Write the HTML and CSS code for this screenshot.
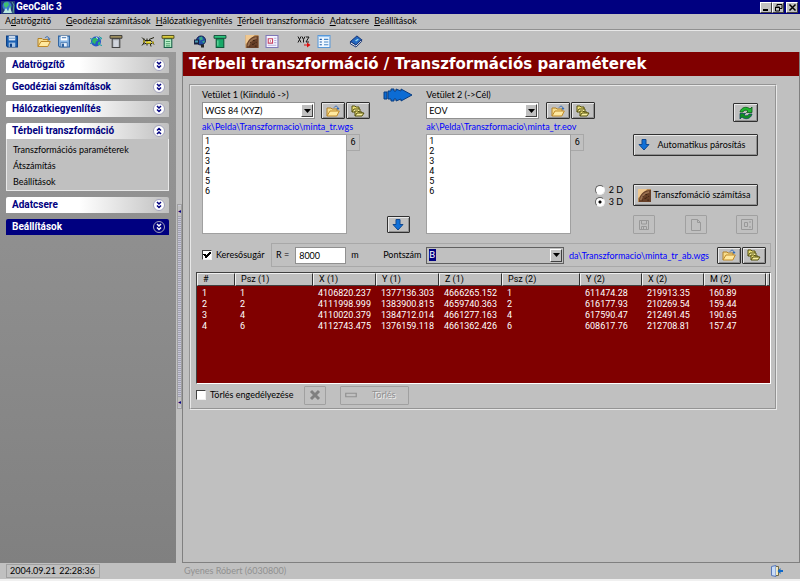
FILE: index.html
```html
<!DOCTYPE html>
<html lang="hu">
<head>
    <meta charset="UTF-8">
    <meta name="viewport" content="width=device-width, initial-scale=1.0">
    <title>GeoCalc 3</title>
    <link rel="stylesheet" href="styles.css">
</head>
<body>
    <!-- shared icons -->
    <svg class="sprite" aria-hidden="true">
        <symbol id="i-disk" viewBox="0 0 12 12">
            <path d="M1 1h10v10H2L1 10z" fill="#1c62b4" stroke="#0b3f86"/>
            <path d="M3 1h6v4H3z" fill="#dfeaf6"/><path d="M3 3h6" stroke="#7fa3cc"/>
            <path d="M3 7h6v4H3z" fill="#a8c4e4"/><path d="M4 8h2v3H4z" fill="#0b3f86"/>
        </symbol>
        <symbol id="i-disk2" viewBox="0 0 12 12">
            <path d="M1 1h10v10H2L1 10z" fill="#8cb8e6" stroke="#2d62a0"/>
            <path d="M3 1h6v4H3z" fill="#fff"/><path d="M4 2.500h4" stroke="#4878b0"/>
            <path d="M3 7h6v4H3z" fill="#e4eefa" stroke="#2d62a0" stroke-width=".6"/><path d="M4 8h2v3H4z" fill="#2d62a0"/>
        </symbol>
        <symbol id="i-open" viewBox="0 0 14 12">
            <path d="M1 11V3h4l1 1h5v2" fill="#f6dc8c" stroke="#b08028"/>
            <path d="M1 11l3-5h9.300l-2.500 5z" fill="#ffe9a0" stroke="#c08a28"/>
            <path d="M8 2.500C9.500.5 11.500 1 12 3" fill="none" stroke="#2a66b8"/><path d="M10.500 3h3L12 5z" fill="#2a66b8"/>
        </symbol>
        <symbol id="i-folders" viewBox="0 0 14 12">
            <path d="M1 7V1h3l1 1h3v2" fill="#eee27a" stroke="#54500c"/>
            <path d="M1 7l2-3h6v3z" fill="#f8f0a0" stroke="#54500c"/>
            <path d="M4 11V6h3l1 1h3v1.500" fill="#eee27a" stroke="#54500c"/>
            <path d="M4 11l2-3h7l-2 3z" fill="#f8f0a0" stroke="#54500c"/>
        </symbol>
        <symbol id="i-globe" viewBox="0 0 14 12">
            <circle cx="7" cy="6" r="5" fill="#2458c8"/>
            <path d="M4 3l4-1 1 3-2 1-1 3-3-3zM9 7l2-1v3L9 10z" fill="#30b868"/>
            <path d="M1 3l3 1M10 1l3 2M10 4l3-1M1 8l3-1M10 9l3 1" stroke="#18a0a8"/>
            <path d="M7 2l2 1" stroke="#d8f4ff"/>
        </symbol>
        <symbol id="i-scroll" viewBox="0 0 12 12">
            <path d="M2.500 3.500h7v8h-7z" fill="#b8bcc4" stroke="#444"/><path d="M4 5h4v6H4z" fill="#d0d4dc"/>
            <path d="M.5.500h11v2.500H.5z" fill="#a09060" stroke="#303030" stroke-width=".8"/>
        </symbol>
        <symbol id="i-scroll-l" viewBox="0 0 12 12">
            <path d="M2.500 3.500h7v8h-7z" fill="#b8f0c8" stroke="#186048"/><path d="M4 6h4M4 8h4M4 10h4" stroke="#50a070"/>
            <path d="M.5.500h11v2.500H.5z" fill="#e0d040" stroke="#404010" stroke-width=".8"/>
        </symbol>
        <symbol id="i-scroll-g" viewBox="0 0 12 12">
            <path d="M2.500 3.500h7v8h-7z" fill="#18a868" stroke="#0c5838"/><path d="M4 5v5" stroke="#70e0a8"/>
            <path d="M.5.500h11v2.500H.5z" fill="#30c880" stroke="#0c4030" stroke-width=".8"/>
        </symbol>
        <symbol id="i-survey" viewBox="0 0 14 12">
            <path d="M1 2l3 3M1 10l3-4M3 3v6M4 5h6M4 8h7M6 3v7M8 4l5-2M10 5l3 4M9 7l1 4" fill="none" stroke="#202010"/>
            <path d="M5 6h5v2H5z" fill="#e8d820"/><path d="M11 6h2v2h-2zM2 5h2v2H2z" fill="#a89818"/>
        </symbol>
        <symbol id="i-net" viewBox="0 0 14 12">
            <circle cx="8" cy="5" r="4.500" fill="#2050a8" stroke="#101848"/>
            <path d="M6 2l3-1 1 3-3 1zM9 6l3-1-1 3z" fill="#38a888"/>
            <path d="M1 4h5v5H1z" fill="#182040"/><path d="M2 5h3v2H2z" fill="#4a9ab0"/>
            <path d="M8 9h3v3H8z" fill="#282828"/>
        </symbol>
        <symbol id="i-planet" viewBox="0 0 14 14">
            <path d="M0 0h14v14H0z" fill="#b88850"/><path d="M0 0h10L0 10z" fill="#f0c890"/>
            <path d="M1 14C1 6 6 1 14 1v13z" fill="#684028"/>
            <path d="M3 12c1-5 4-8 9-9" fill="none" stroke="#987050" stroke-width="2"/>
            <path d="M5 8h1M8 6h2M7 10h2M11 8h1M10 12h2M4 12h1M9 9h1" stroke="#382010"/>
        </symbol>
        <symbol id="i-card" viewBox="0 0 12 12">
            <path d="M.5.500h11v11H.5z" fill="#f4f4ff" stroke="#8078b8"/>
            <path d="M2.500 3.500h4v4h-4z" fill="#fff" stroke="#c84060"/><path d="M4 5h1v1H4z" fill="#a01830"/>
            <path d="M8 3h2M8 5h2M8 7h2M2 9.500h8" stroke="#b8b0d8"/>
        </symbol>
        <symbol id="i-xyz" viewBox="0 0 14 12">
            <path d="M1 1l3 6M4 1L1 7M5 1l1.500 3L8 1M6.500 4v3M9 1.500h3L9 6.500h3" fill="none" stroke="#181818"/>
            <path d="M7 9.500h4" stroke="#e01010"/><path d="M10 7l3.500 2.500L10 12z" fill="#e01010"/>
        </symbol>
        <symbol id="i-list" viewBox="0 0 12 12">
            <path d="M.5.500h11v11H.5z" fill="#f0f8ff" stroke="#5898d8"/><path d="M1 1h10v1H1z" fill="#90c0f0"/>
            <path d="M2 4h2M2 6.500h2M2 9h2" stroke="#1858a8"/><path d="M6 4h4M6 6.500h4M6 9h4" stroke="#4888c8"/>
        </symbol>
        <symbol id="i-book" viewBox="0 0 14 14">
            <path d="M1 7l7-6 5 4-6 6z" fill="#2468c0" stroke="#0c2c70"/>
            <path d="M1 7v2.500L7 13l6-6V5l-6 6z" fill="#f0f0f0" stroke="#0c2c70"/>
            <path d="M6 6l3-2 1 1-3 2z" fill="#90d8f0"/>
        </symbol>
        <symbol id="i-down" viewBox="0 0 12 12">
            <path d="M4 .5h4v5h3L6 11 1 5.500h3z" fill="#1070d8" stroke="#104890"/>
        </symbol>
        <symbol id="i-x" viewBox="0 0 14 14">
            <path d="M3 3l8 8M11 3l-8 8" stroke="#808080" stroke-width="3"/>
        </symbol>
        <symbol id="i-more" viewBox="0 0 12 12">
            <circle cx="6" cy="6" r="5.500" class="ring"/><path d="M4 3l2 2 2-2M4 6.500l2 2 2-2" class="chev"/>
        </symbol>
        <symbol id="i-less" viewBox="0 0 12 12">
            <circle cx="6" cy="6" r="5.500" class="ring"/><path d="M4 5.500l2-2 2 2M4 9l2-2 2 2" class="chev"/>
        </symbol>
        <symbol id="i-drop" viewBox="0 0 7 4"><path d="M0 0h7L3.500 4z" fill="#000"/></symbol>
    </svg>

    <div class="titlebar">
        <svg class="logo" viewBox="0 0 14 13">
            <path d="M0 0h14v13H0z" fill="#203878"/><circle cx="6" cy="5" r="4.500" fill="#3878d0"/>
            <path d="M3 2l4-1 1 3-3 3-2-2zM8 6l2-1v3z" fill="#40c070"/>
            <path d="M2 12l3-5 2 3 2-4 2 6z" fill="#b8e8e0"/><path d="M11 1l2 3-1 8" fill="none" stroke="#58a890"/>
        </svg>
        <h1>GeoCalc 3</h1>
        <div class="win-buttons">
            <button aria-label="Kis méret"><svg viewBox="0 0 9 9"><path d="M1 7h5" stroke="#000" stroke-width="2"/></svg></button>
            <button aria-label="Előző méret"><svg viewBox="0 0 9 9"><path d="M3 3V1.500h5v4H6M3 1.500h5M1.500 4h4v4h-4zM1 4.500h5" fill="none" stroke="#000"/></svg></button>
            <button class="close" aria-label="Bezárás"><svg viewBox="0 0 9 9"><path d="M1.500 1.500l6 6M7.500 1.500l-6 6" stroke="#000" stroke-width="1.500"/></svg></button>
        </div>
    </div>

    <nav class="menubar">
        <a href="#" class="first">A<u>d</u>atrögzítő</a>
        <a href="#"><u>G</u>eodéziai számítások</a>
        <a href="#"><u>H</u>álózatkiegyenlítés</a>
        <a href="#"><u>T</u>érbeli transzformáció</a>
        <a href="#"><u>A</u>datcsere</a>
        <a href="#"><u>B</u>eállítások</a>
    </nav>

    <div class="toolbar">
        <div class="tools"><button aria-label="Mentés"><svg><use href="#i-disk"/></svg></button></div>
        <div class="tools">
            <button aria-label="Megnyitás"><svg><use href="#i-open"/></svg></button>
            <button aria-label="Mentés másként"><svg><use href="#i-disk2"/></svg></button>
        </div>
        <div class="tools">
            <button aria-label="Geodéziai számítások"><svg><use href="#i-globe"/></svg></button>
            <button aria-label="Jegyzőkönyv"><svg><use href="#i-scroll"/></svg></button>
        </div>
        <div class="tools">
            <button aria-label="Mérések"><svg><use href="#i-survey"/></svg></button>
            <button aria-label="Mérési jegyzőkönyv"><svg><use href="#i-scroll-l"/></svg></button>
        </div>
        <div class="tools">
            <button aria-label="Hálózat"><svg><use href="#i-net"/></svg></button>
            <button aria-label="Hálózati jegyzőkönyv"><svg><use href="#i-scroll-g"/></svg></button>
        </div>
        <div class="tools">
            <button aria-label="Transzformáció"><svg><use href="#i-planet"/></svg></button>
            <button aria-label="Paraméterek"><svg><use href="#i-card"/></svg></button>
        </div>
        <div class="tools">
            <button aria-label="Koordináták"><svg><use href="#i-xyz"/></svg></button>
            <button aria-label="Lista"><svg><use href="#i-list"/></svg></button>
        </div>
        <div class="tools"><button aria-label="Súgó"><svg><use href="#i-book"/></svg></button></div>
    </div>

    <div class="workspace">
        <aside class="sidebar">
            <button class="section">Adatrögzítő<svg><use href="#i-more"/></svg></button>
            <button class="section">Geodéziai számítások<svg><use href="#i-more"/></svg></button>
            <button class="section">Hálózatkiegyenlítés<svg><use href="#i-more"/></svg></button>
            <div>
                <button class="section">Térbeli transzformáció<svg><use href="#i-less"/></svg></button>
                <div class="section-body">
                    <a href="#">Transzformációs paraméterek</a>
                    <a href="#">Átszámítás</a>
                    <a href="#">Beállítások</a>
                </div>
            </div>
            <button class="section">Adatcsere<svg><use href="#i-more"/></svg></button>
            <button class="section active">Beállítások<svg><use href="#i-more"/></svg></button>
        </aside>
        <div class="splitter">
            <div class="grip"><span>◂</span><span>◂</span></div>
        </div>

        <main class="content">
            <h2>Térbeli transzformáció / Transzformációs paraméterek</h2>
            <div class="group">
                <div class="setup">
                    <div class="projection">
                        <label for="proj1">Vetület 1 (Kiinduló -&gt;)</label>
                        <div class="pick">
                            <span class="combo"><select id="proj1"><option>WGS 84 (XYZ)</option></select><span class="drop"><svg><use href="#i-drop"/></svg></span></span>
                            <span class="pair">
                                <button class="btn" aria-label="Megnyitás"><svg><use href="#i-open"/></svg></button>
                                <button class="btn" aria-label="Mappák"><svg><use href="#i-folders"/></svg></button>
                            </span>
                        </div>
                        <a href="#" class="path">ak\Pelda\Transzformacio\minta_tr.wgs</a>
                        <div class="points">
                            <select size="6" aria-label="Pontok 1">
                                <option>1</option><option>2</option><option>3</option><option>4</option><option>5</option><option>6</option>
                            </select>
                            <span class="count">6</span>
                        </div>
                    </div>
                    <div class="between">
                        <svg class="big-arrow" viewBox="0 0 30 14"><path d="M1 4h3v7H1zM5 3h3V1h3v2h2V1l5 2V1l11 6-11 6v-2l-5 2v-2h-2v2H8v-2H5z" fill="#0c6cd4" stroke="#083c80"/></svg>
                        <button class="btn" aria-label="Hozzáadás"><svg><use href="#i-down"/></svg></button>
                    </div>
                    <div class="projection">
                        <label for="proj2">Vetület 2 (-&gt;Cél)</label>
                        <div class="pick">
                            <span class="combo"><select id="proj2"><option>EOV</option></select><span class="drop"><svg><use href="#i-drop"/></svg></span></span>
                            <span class="pair">
                                <button class="btn" aria-label="Megnyitás"><svg><use href="#i-open"/></svg></button>
                                <button class="btn" aria-label="Mappák"><svg><use href="#i-folders"/></svg></button>
                            </span>
                        </div>
                        <a href="#" class="path">ak\Pelda\Transzformacio\minta_tr.eov</a>
                        <div class="points">
                            <select size="6" aria-label="Pontok 2">
                                <option>1</option><option>2</option><option>3</option><option>4</option><option>5</option><option>6</option>
                            </select>
                            <span class="count">6</span>
                        </div>
                    </div>
                    <div class="dims">
                        <label><input type="radio" name="dim">2 D</label>
                        <label><input type="radio" name="dim" checked>3 D</label>
                    </div>
                    <div class="actions">
                        <button class="btn refresh" aria-label="Frissítés"><svg viewBox="0 0 16 14"><path d="M2 6C3 1 9 0 12 3l2-2v5.500H8.500L10 5C8 3.500 5.500 4 5 6z" fill="#20b830" stroke="#0c5818" stroke-width=".8"/><path d="M14 8c-1 5-7 6-10 3l-2 2V7.500h5.500L6 9c2 1.500 4.500 1 5-1z" fill="#109020" stroke="#0c4858" stroke-width=".8"/></svg></button>
                        <button class="btn wide auto"><svg><use href="#i-down"/></svg><span>Automatikus párosítás</span></button>
                        <button class="btn wide calc"><svg><use href="#i-planet"/></svg><span>Transzfomáció számítása</span></button>
                        <div class="outputs">
                            <button class="btn" disabled aria-label="Mentés"><svg viewBox="0 0 12 12"><path d="M1.500 1.500h9v9h-9zM3.500 2v3h5V2M3.500 10.500v-3h5v3M5.500 8v2" fill="none" stroke="#909090"/></svg></button>
                            <button class="btn" disabled aria-label="Új lap"><svg viewBox="0 0 12 12"><path d="M1.500.500h6l3 3v8h-9zM7.500.500v3h3" fill="none" stroke="#909090"/></svg></button>
                            <button class="btn" disabled aria-label="Kártya"><svg viewBox="0 0 12 12"><path d="M.5.500h11v10H.5zM3.500 3.500h3v4h-3zM8 3h2M8 8h2" fill="none" stroke="#909090"/></svg></button>
                        </div>
                    </div>
                </div>

                <div class="filter">
                    <label class="check"><input type="checkbox" checked>Keresősugár</label>
                    <div class="filter-box">
                        <label for="radius">R =</label>
                        <input type="text" id="radius" value="8000">
                        <span class="unit">m</span>
                        <label for="point" class="point-label">Pontszám</label>
                        <span class="combo gray"><select id="point"><option>B</option></select><span class="drop"><svg><use href="#i-drop"/></svg></span></span>
                        <a href="#" class="path">da\Transzformacio\minta_tr_ab.wgs</a>
                        <span class="pair">
                            <button class="btn" aria-label="Megnyitás"><svg><use href="#i-open"/></svg></button>
                            <button class="btn" aria-label="Mappák"><svg><use href="#i-folders"/></svg></button>
                        </span>
                    </div>
                </div>

                <div class="table-box">
                    <table>
                        <colgroup>
                            <col class="c-num"><col class="c-psz"><col class="c-src"><col class="c-src"><col class="c-src"><col class="c-psz"><col class="c-dst"><col class="c-dst"><col class="c-dst"><col>
                        </colgroup>
                        <thead>
                            <tr><th>#</th><th>Psz (1)</th><th>X (1)</th><th>Y (1)</th><th>Z (1)</th><th>Psz (2)</th><th>Y (2)</th><th>X (2)</th><th>M (2)</th><th></th></tr>
                        </thead>
                        <tbody>
                            <tr><td>1</td><td>1</td><td>4106820.237</td><td>1377136.303</td><td>4666265.152</td><td>1</td><td>611474.28</td><td>219913.35</td><td>160.89</td><td></td></tr>
                            <tr><td>2</td><td>2</td><td>4111998.999</td><td>1383900.815</td><td>4659740.363</td><td>2</td><td>616177.93</td><td>210269.54</td><td>159.44</td><td></td></tr>
                            <tr><td>3</td><td>4</td><td>4110020.379</td><td>1384712.014</td><td>4661277.163</td><td>4</td><td>617590.47</td><td>212491.45</td><td>190.65</td><td></td></tr>
                            <tr><td>4</td><td>6</td><td>4112743.475</td><td>1376159.118</td><td>4661362.426</td><td>6</td><td>608617.76</td><td>212708.81</td><td>157.47</td><td></td></tr>
                        </tbody>
                    </table>
                </div>

                <div class="delete-row">
                    <label class="check"><input type="checkbox">Törlés engedélyezése</label>
                    <button class="btn" disabled aria-label="Mégse"><svg><use href="#i-x"/></svg></button>
                    <button class="btn delete" disabled><svg viewBox="0 0 12 12"><path d="M1.500 4.500h9v3h-9z" fill="none" stroke="#909090"/></svg><span>Törlés</span></button>
                </div>
            </div>
        </main>
    </div>

    <footer class="statusbar">
        <div class="clock"><span>2004.09.21</span><span>22:28:36</span></div>
        <span class="user">Gyenes Róbert (6030800)</span>
        <button class="exit" aria-label="Kilépés"><svg viewBox="0 0 12 12"><path d="M.5 1.500L5 .500v11L.5 10.500z" fill="#c8dcf8" stroke="#5878b8"/><path d="M5 1.500h2.500v9H5" fill="#f0e8c0" stroke="#706848"/><path d="M12 5v2H9.500v2L6.500 6l3-3v2z" fill="#1068c8"/></svg></button>
    </footer>
</body>
</html>
```
FILE: styles.css
```css
* { margin: 0; padding: 0; box-sizing: border-box; }
html, body { height: 100%; }
body { display: flex; flex-direction: column; background: #c0c0c0; color: #000; font: 9px/14px Lato, "Liberation Sans", Arial, sans-serif; white-space: nowrap; }
button, input, select { font: inherit; color: inherit; }
a { color: inherit; text-decoration: none; }
svg { display: block; width: 12px; height: 12px; flex: none; }
.sprite { position: absolute; width: 0; height: 0; }

/* title, menu, toolbar */
.titlebar { display: flex; align-items: center; height: 14px; flex: none; background: #000080; color: #fff; }
.titlebar h1 { flex: 1; font: bold 10px/14px Roboto, Arial, sans-serif; }
.logo { width: 14px; height: 13px; margin: 0 1px; }
.win-buttons { display: flex; padding-right: 2px; }
.win-buttons button { display: flex; align-items: center; justify-content: center; width: 12px; height: 11px; background: #c0c0c0; border: 1px solid; border-color: #fff #404040 #404040 #fff; }
.win-buttons svg { width: 9px; height: 9px; }
.win-buttons .close { margin-left: 2px; }
.menubar { display: flex; gap: 5px; flex: none; height: 16px; padding-left: 5px; border-bottom: 1px solid #909090; }
.menubar .first { margin-right: 10px; }
.toolbar { display: flex; align-items: center; gap: 12px; flex: none; height: 22px; padding-left: 2px; border-top: 1px solid #e8e8e8; }
.tools { display: flex; }
.tools button { display: flex; align-items: center; justify-content: center; width: 20px; height: 16px; border: none; background: none; }
.tools svg { width: 14px; height: 13px; }

/* sidebar */
.workspace { display: flex; flex: 1; min-height: 0; }
.sidebar { display: flex; flex-direction: column; gap: 6px; width: 176px; padding: 5px 7px 0 6px; background: linear-gradient(#989898, #808080); }
.section { display: flex; align-items: center; justify-content: space-between; width: 100%; height: 16px; padding: 0 4px 0 6px; border: none; border-radius: 2px 2px 0 0; background: linear-gradient(90deg, #fff 45%, #c0c0c0); color: #000080; font: bold 10px/16px Roboto, Arial, sans-serif; }
.ring { fill: var(--ring, #fff); stroke: #a0a0b8; }
.chev { fill: none; stroke: currentColor; stroke-width: 1.500; }
.section.active { --ring: #000080; background: #000080; color: #fff; }
.section-body { display: flex; flex-direction: column; height: 52px; padding: 3px 6px; border: 1px solid #e8e8e8; border-top: none; background: #c0c0c0; line-height: 16px; }
.splitter { width: 6px; padding: 152px 0 0 1px; }
.grip { display: flex; flex-direction: column; justify-content: space-between; width: 5px; height: 205px; padding: 1px 0; overflow: hidden; border: 1px solid #a0a0a0; background: repeating-linear-gradient(#c8c8d8 0 1px, #a0a0b0 1px 2px); color: #000080; font: 6px/10px "DejaVu Sans", sans-serif; }
.grip span { background: #c0c0c0; }

/* content */
.content { flex: 1; min-width: 0; border: 1px solid #808080; border-top: none; }
h2 { height: 24px; padding-left: 6px; background: #800000; color: #fff; font: bold 15px/24px "DejaVu Sans", Verdana, sans-serif; }
.group { margin: 8px 22px 0 6px; padding: 2px 4px 2px 5px; border: 2px groove #e8e8e8; }
.setup { display: flex; padding: 0 13px 0 6px; height: 146px; }
.projection { width: 169px; }
.projection label { display: block; }
.pick { display: flex; justify-content: space-between; height: 17px; }
.combo { position: relative; display: block; width: 113px; height: 17px; }
.combo select { appearance: none; width: 100%; height: 100%; padding: 0 2px; border: 1px solid #909090; border-radius: 0; background: #fff; }
.drop { position: absolute; top: 2px; right: 2px; bottom: 2px; display: flex; align-items: center; justify-content: center; width: 12px; background: #c0c0c0; border: 1px solid; border-color: #fff #404040 #404040 #fff; pointer-events: none; }
.drop svg { width: 7px; height: 4px; }
.pair { display: flex; gap: 1px; }
.btn { display: flex; align-items: center; justify-content: center; background: #c0c0c0; border: 1px solid #303030; border-radius: 1px; box-shadow: inset 1px 1px #e8e8e8, inset -1px -1px #909090; }
.btn:disabled { border-color: #a0a0a0; box-shadow: none; color: #909090; }
.pair .btn { width: 24px; height: 17px; }
.pair svg { width: 14px; height: 12px; }
.path { display: block; height: 15px; line-height: 15px; color: #0000ff; }
.points { display: flex; align-items: flex-start; }
.points select { width: 145px; height: 100px; padding: 1px 0; overflow: hidden; border: 1px solid #a0a0a0; border-radius: 0; background: #fff; }
.points option { min-height: 0; height: 10px; padding: 0 2px; line-height: 10px; }
.points select, .count { font-family: Roboto, Arial, sans-serif; }
.count { width: 13px; height: 17px; border: 1px solid #a8a8a8; border-left: none; text-align: center; line-height: 15px; }
.between { display: flex; flex-direction: column; align-items: center; justify-content: space-between; flex: none; width: 56px; padding-bottom: 1px; }
.big-arrow { width: 30px; height: 14px; }
.between .btn { width: 23px; height: 17px; }
.dims { display: flex; flex-direction: column; margin-left: auto; padding-top: 96px; }
.dims label { display: flex; align-items: center; gap: 4px; height: 12px; }
.dims input { appearance: none; width: 10px; height: 10px; border: 1px solid; border-color: #606060 #f0f0f0 #f0f0f0 #606060; border-radius: 50%; background: #fff; }
.dims input:checked { background: radial-gradient(circle, #000 0 1px, #fff 2px); }
.actions { display: flex; flex-direction: column; width: 125px; margin-left: 10px; padding-top: 15px; flex: none; }
.refresh { align-self: flex-end; width: 25px; height: 19px; }
.refresh svg { width: 16px; height: 14px; }
.wide { width: 100%; height: 22px; padding: 0 4px; }
.wide span { flex: 1; text-align: center; }
.auto { margin-top: 12px; }
.calc { margin-top: 28px; }
.calc svg { width: 13px; height: 13px; }
.outputs { display: flex; justify-content: space-between; margin-top: 9px; }
.outputs .btn { width: 22px; height: 19px; }
.outputs svg { opacity: .8; }

.filter { display: flex; align-items: center; margin-top: 9px; padding-left: 6px; }
.check { display: flex; align-items: center; gap: 4px; }
.check input { appearance: none; width: 10px; height: 10px; border: 1px solid; border-color: #404040 #f0f0f0 #f0f0f0 #404040; background: #fff; }
.check input:checked { background: linear-gradient(45deg, transparent 3px, #000 3px 5px, transparent 5px) 0 3px / 4px 5px no-repeat, linear-gradient(-45deg, transparent 3px, #000 3px 5px, transparent 5px) 2px 1px / 6px 6px no-repeat, #fff; }
.filter .check { width: 69px; }
.filter-box { display: flex; align-items: center; flex: 1; min-width: 0; height: 24px; padding: 0 4px; border: 1px solid #a8a8a8; }
.filter-box input { width: 51px; height: 17px; margin-left: 6px; padding: 0 3px; border: 1px solid #909090; background: #fff; }
.unit { width: 37px; padding-left: 5px; }
.point-label { width: 43px; }
.filter-box .combo { width: 138px; }
.gray select { background: linear-gradient(#000080, #000080) 2px 1px / 7px 12px no-repeat, #c0c0c0; color: #fff; border-color: #606060; }
.filter-box .path { flex: 1; text-align: right; margin-right: 8px; }

.table-box { height: 112px; margin-top: 5px; border: 1px solid; border-color: #404040 #fff #fff #404040; background: #800000; overflow: hidden; font-family: Roboto, Arial, sans-serif; }
table { width: 100%; table-layout: fixed; border-collapse: separate; border-spacing: 0; }
.c-num { width: 38px; }
.c-psz { width: 78px; }
.c-src { width: 63px; }
.c-dst { width: 62px; }
th { height: 13px; padding-left: 5px; background: #c0c0c0; border: 1px solid; border-color: #f0f0f0 #303030 #404040 #f0f0f0; font-weight: normal; text-align: left; line-height: 11px; }
th:last-child { padding: 0; }
td { height: 11px; padding-left: 5px; color: #fff; line-height: 11px; }
td:last-child { padding: 0; }
tbody tr:first-child td { height: 13px; padding-top: 2px; }

.delete-row { display: flex; align-items: center; height: 22px; }
.delete-row .check { width: 108px; }
.delete-row .btn { width: 22px; height: 19px; }
.delete-row svg { width: 14px; height: 14px; }
.delete-row .delete { justify-content: flex-start; gap: 14px; width: 69px; margin-left: 14px; padding-left: 3px; }
.delete span { text-shadow: 1px 1px #f0f0f0; }

/* status bar */
.statusbar { display: flex; align-items: center; flex: none; height: 18px; padding: 0 17px 0 6px; border-bottom: 2px solid #f0f0f0; }
.clock { display: flex; justify-content: space-between; width: 94px; height: 14px; padding: 0 4px 0 3px; border: 1px solid #a0a0a0; line-height: 12px; }
.user { flex: 1; padding-left: 84px; color: #909090; }
.exit { border: none; background: none; }
```
